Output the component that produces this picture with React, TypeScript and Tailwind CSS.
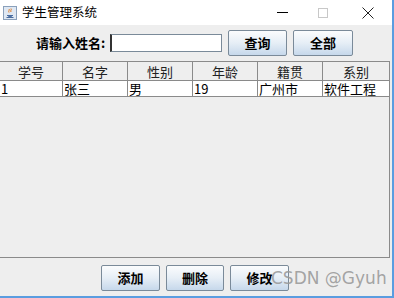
import React from 'react';

const cjk = { fontFamily: '"Noto Sans CJK SC", "Liberation Sans", sans-serif' };

const columns = ['学号', '名字', '性别', '年龄', '籍贯', '系别'];
const rows = [['1', '张三', '男', '19', '广州市', '软件工程']];

function JavaIcon() {
  return (
    <svg width="14" height="14" viewBox="0 0 14 14">
      <rect x="0.5" y="0.5" width="13" height="13" fill="#dfe8f3" stroke="#8aa0bb" />
      <path d="M4 9.5h6M4.5 9.5c0 1.5 5 1.5 5 0" stroke="#4a6da0" fill="none" strokeWidth="1" />
      <path d="M6 3c1 1-1 2 0 3.5M8 2.5c1 1-1 2 0 3.5" stroke="#e07a20" fill="none" strokeWidth="1" />
      <path d="M3.5 11.5h7" stroke="#4a6da0" strokeWidth="1" />
    </svg>
  );
}

function SwingButton({ label, className }: { label: string; className: string }) {
  return (
    <button
      className={`flex items-center justify-center border border-[#7a8a99] rounded-[2px] bg-linear-to-b from-[#fbfcfd] via-[#e6eef6] to-[#c6d8eb] text-[13px] font-bold text-black ${className}`}
      style={cjk}
    >
      {label}
    </button>
  );
}

export default function App() {
  return (
    <div className="w-[394px] h-[298px] flex flex-col bg-[#eeeeee] border-r-2 border-b-2 border-[#5a9de0] overflow-hidden" style={cjk}>
      {/* 标题栏 */}
      <div className="h-[25px] bg-white flex items-center shrink-0">
        <div className="ml-[3px]"><JavaIcon /></div>
        <span className="ml-[5px] text-[12.5px] text-black">学生管理系统</span>
        <div className="ml-auto flex items-center">
          <div className="w-[11px] h-px bg-black mr-[30px]" />
          <div className="w-[10px] h-[10px] border border-[#c8c8c8] mr-[34px]" />
          <svg width="12" height="12" viewBox="0 0 12 12" className="mr-[18px]">
            <path d="M0.5 0.5l11 11M11.5 0.5l-11 11" stroke="#222" strokeWidth="1" />
          </svg>
        </div>
      </div>

      {/* 搜索 */}
      <div className="h-[36px] flex items-center shrink-0">
        <span className="ml-[36px] text-[13px] font-bold w-[72px]">请输入姓名:</span>
        <input className="ml-[2px] w-[112px] h-[18px] bg-white border border-[#7a8a99] border-l-2 border-l-[#333] outline-none" />
        <SwingButton label="查询" className="ml-[6px] w-[59px] h-[26px]" />
        <SwingButton label="全部" className="ml-[6px] w-[60px] h-[26px]" />
      </div>

      {/* 表格 */}
      <div className="h-[197px] w-[390px] shrink-0 border-r border-b border-[#8a8a8a] flex flex-col">
        <div className="grid grid-cols-[63px_65px_65px_65px_65px_1fr] h-[20px] bg-[#eeeeee] border-t border-b border-[#8a8a8a]">
          {columns.map((c, i) => (
            <div key={c} className={`flex items-center justify-center text-[13px] leading-none text-[#222] ${i < 5 ? 'border-r border-[#8a8a8a]' : ''}`}>
              {c}
            </div>
          ))}
        </div>
        {rows.map((r, ri) => (
          <div key={ri} className="grid grid-cols-[63px_65px_65px_65px_65px_1fr] h-[16px] bg-white border-b border-[#8a8a8a]">
            {r.map((v, i) => (
              <div key={i} className={`flex items-center pl-[1px] text-[13px] leading-none text-black ${i < 5 ? 'border-r border-[#8a8a8a]' : ''}`}>
                {v}
              </div>
            ))}
          </div>
        ))}
      </div>

      {/* 操作按钮 */}
      <div className="relative flex-1 flex items-start pt-[7px]">
        <SwingButton label="添加" className="ml-[101px] w-[59px] h-[26px]" />
        <SwingButton label="删除" className="ml-[6px] w-[58px] h-[26px]" />
        <SwingButton label="修改" className="ml-[6px] w-[59px] h-[26px]" />
        <span className="absolute left-[271px] top-[8px] text-[17px] text-[#9a9a9a]/90" style={{ fontFamily: '"DejaVu Sans", sans-serif' }}>
          CSDN @Gyuh
        </span>
      </div>
    </div>
  );
}
